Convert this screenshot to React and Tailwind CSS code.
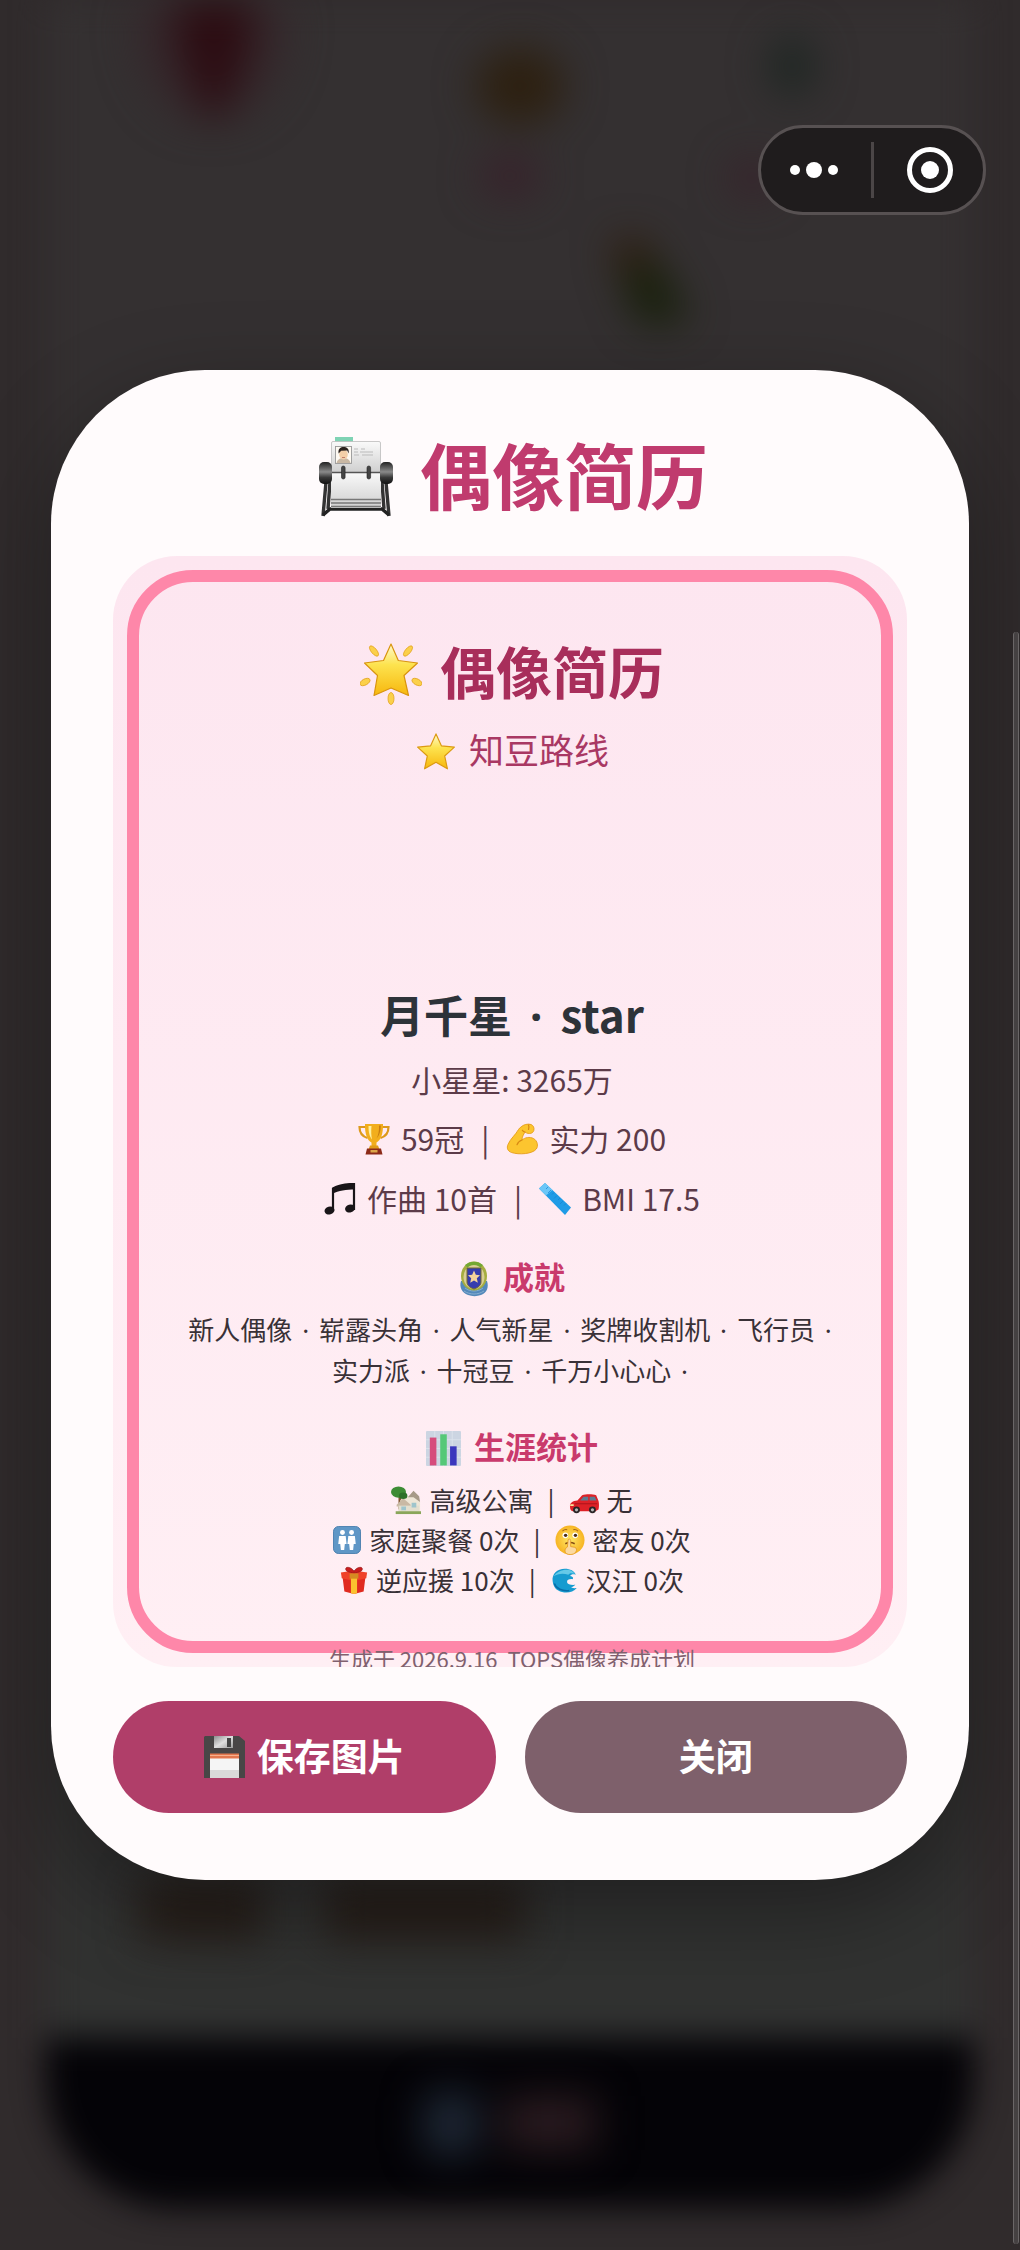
import React from "react";

function Icon({ className, children, viewBox = "0 0 32 32" }) {
  return (
    <svg className={className} viewBox={viewBox} aria-hidden="true" fill="none">
      {children}
    </svg>
  );
}

const STAR = "M16 2.2 20.1 11.3 30 12.3 22.6 19 24.7 28.8 16 23.8 7.3 28.8 9.4 19 2 12.3 11.9 11.3Z";

function Rolodex({ className }) {
  return (
    <Icon className={className} viewBox="0 0 76 82">
      <defs>
        <linearGradient id="knob" x1="0" y1="0" x2="0" y2="1">
          <stop offset="0" stopColor="#222" />
          <stop offset=".45" stopColor="#8a8a8a" />
          <stop offset=".7" stopColor="#3a3a3a" />
          <stop offset="1" stopColor="#111" />
        </linearGradient>
        <linearGradient id="sheet" x1="0" y1="0" x2="0" y2="1">
          <stop offset="0" stopColor="#fafafa" />
          <stop offset="1" stopColor="#cfcfcf" />
        </linearGradient>
      </defs>
      <rect x="17" y="1" width="18" height="8" fill="#7fd3b4" />
      <path d="M8 46 5 80M12 46 10 73M68 46l3 34M64 46l2 27" stroke="#333" strokeWidth="3.4" />
      <path d="M5 79 12 73H64L71 79" stroke="#222" strokeWidth="3.4" strokeLinejoin="round" />
      <rect x="13" y="36" width="50" height="36" fill="url(#sheet)" />
      <path d="M13 63.500h50M13 67h50M13 70.500h50" stroke="#777" strokeWidth="1.300" />
      <rect x="13.500" y="5.500" width="49" height="31" rx="1.500" fill="url(#sheet)" stroke="#bbb" strokeWidth=".8" />
      <rect x="17.500" y="10.500" width="16" height="17" fill="#fdf9f2" stroke="#999" strokeWidth=".9" />
      <path d="M18.500 27c1-4 4-5 7-5s6 1 7 5Z" fill="#c9b8a4" />
      <ellipse cx="25.500" cy="18.500" rx="4.300" ry="5" fill="#f3cfa8" />
      <path d="M20.600 17.500c-.8-5 2-6.500 5-6.500s6 1.500 5 6.500l-1.400-3-6 .3Z" fill="#2a211d" />
      <path d="M24 21.500h3" stroke="#b4695a" strokeWidth=".8" />
      <path d="M36 13h4m3 0h4M36 16h4m2 0h13M36 19h5m3 0h11" stroke="#b5b5b5" strokeWidth=".9" />
      <path d="M13 36.500h50" stroke="#555" strokeWidth="1.600" />
      <rect x="1" y="26" width="13" height="22" rx="5" fill="url(#knob)" />
      <rect x="62" y="26" width="13" height="22" rx="5" fill="url(#knob)" />
      <rect x="23.500" y="30" width="3.600" height="13" rx="1.800" fill="#444" stroke="#222" strokeWidth=".6" />
      <rect x="49" y="30" width="3.600" height="13" rx="1.800" fill="#444" stroke="#222" strokeWidth=".6" />
    </Icon>
  );
}

function StarFill({ id }) {
  return (
    <defs>
      <linearGradient id={id} x1="0" y1="0" x2="0" y2="1">
        <stop offset="0" stopColor="#fffbd0" />
        <stop offset=".4" stopColor="#fde34f" />
        <stop offset="1" stopColor="#f7b70d" />
      </linearGradient>
    </defs>
  );
}

function GlowingStar({ className }) {
  return (
    <Icon className={className} viewBox="0 0 62 62">
      <StarFill id="glow" />
      <path
        d="M31 1 38.300 17.500 57.500 20 44 32.500 48.500 52.500 31 45 14 52.500 17.500 32.500 4.500 20 23.500 17.500Z"
        fill="url(#glow)" stroke="#d9940f" strokeWidth="1.200" strokeLinejoin="round"
      />
      <g fill="#fbd04a" stroke="#e3a521" strokeWidth=".8">
        <ellipse cx="14" cy="8" rx="2.700" ry="6.300" transform="rotate(-40 14 8)" />
        <ellipse cx="48" cy="8" rx="2.700" ry="6.300" transform="rotate(40 48 8)" />
        <ellipse cx="5" cy="39" rx="3" ry="5.500" transform="rotate(62 5 39)" />
        <ellipse cx="57" cy="39" rx="3" ry="5.500" transform="rotate(-62 57 39)" />
        <ellipse cx="31" cy="55.500" rx="3" ry="6" />
      </g>
    </Icon>
  );
}

function Star({ className }) {
  return (
    <Icon className={className}>
      <StarFill id="plain" />
      <path d={STAR} fill="url(#plain)" stroke="#dc9a12" strokeWidth=".9" strokeLinejoin="round" />
    </Icon>
  );
}

function Trophy({ className }) {
  return (
    <Icon className={className}>
      <path d="M8 4H1.500c0 6 3 9.500 8 11M24 4h6.500c0 6-3 9.500-8 11" stroke="#dd9a1c" strokeWidth="2.200" />
      <path d="M7 1h18c.4 10-2.500 16.500-6.500 18.500v4h-5v-4C9.500 17.500 6.600 11 7 1Z" fill="#f2ae1c" />
      <path d="M10.500 3c0 7 1.200 10.500 3.500 13.500-.8-4-1-8.500-.5-13.500Z" fill="#fff0a0" />
      <path d="M21 2.500c.3 5-.7 10-2.500 13 3-3 4.300-8 4.300-13Z" fill="#c97d10" />
      <path d="M12 22.500h8l1.300 3.500H10.700Z" fill="#e09a18" />
      <path d="M9 25.500h14l1.500 6h-17Z" fill="#8c2a18" />
      <rect x="12.500" y="27" width="7" height="2.500" fill="#dba548" />
    </Icon>
  );
}

function Biceps({ className }) {
  return (
    <Icon className={className}>
      <path
        d="M15 4c2.500-2.500 7-3.500 10-2.500 2.500 1 3.500 3.500 2.800 6-.6 2-2.300 3-4.300 3-2 0-3.500-.6-4.500-1.500-1.500 2.500-3 5-3 8 3-2.500 7.500-3.500 11.500-1.500 4 2.200 5 7.500 2.800 10.500-3.800 5-17.300 6-24.800 3.500C1.500 28 .5 25 2 21.500 4.500 15.500 9.500 12 12.500 6.500c.7-1.200 1.500-1.800 2.500-2.500Z"
        fill="#fcc52f" stroke="#e59d1b" strokeWidth=".9"
      />
      <path d="M16 17c-2.500.8-4.200 2.400-5 4.700M19 9c-1.200-.3-2-.9-2.600-1.700M22.500 2c.6 1.500.6 3 0 4.500" stroke="#d98a14" strokeWidth="1.200" strokeLinecap="round" />
    </Icon>
  );
}

function Notes({ className }) {
  return (
    <Icon className={className}>
      <path d="M9 28V5.500C14 2.500 22 1 30 1v26" stroke="#191518" strokeWidth="2.200" />
      <path d="M8 5.500C14 2 22 .5 31 .5v6C22 6.500 15 7.500 8 11Z" fill="#191518" />
      <ellipse cx="5.500" cy="27.500" rx="5" ry="4" transform="rotate(-15 5.500 27.500)" fill="#191518" />
      <ellipse cx="26" cy="25.500" rx="5" ry="4" transform="rotate(-15 26 25.500)" fill="#191518" />
    </Icon>
  );
}

function Ruler({ className }) {
  return (
    <Icon className={className}>
      <path d="M6 0 32 24.500 26 32 0 5.500Z" fill="#1f9be6" />
      <path d="M6 0 13.500 7 7 12.500 0 5.500Z" fill="#6bc6f7" />
      <path d="m9 4-2 2m5 1-3 3m6-.5-2 2m5 1-3 3m6-.5-2 2m5 1-3 3m6-.5-2 2" stroke="#1583d0" strokeWidth=".7" />
    </Icon>
  );
}

function Badge({ className }) {
  return (
    <Icon className={className} viewBox="0 0 30 36">
      <path d="M2 20c-2 6 1 12 7 14 4 1.500 9 1.500 13 0 6-2 8-8 6-14Z" fill="#5489ba" />
      <path d="M6 27c5 4 13 4 18 0M5 30c6 4 14 4 20 0" stroke="#86aed0" strokeWidth="1" />
      <ellipse cx="15" cy="15" rx="13" ry="14.500" fill="#a5ad3f" />
      <path d="M6 4c5-4.500 13-4.500 18 0l-3 3c-3-2-9-2-12 0Z" fill="#74a832" />
      <ellipse cx="15" cy="16" rx="10.500" ry="12" fill="#d9ce94" />
      <path d="M8 7h14v14c0 4-4 6-7 7-3-1-7-3-7-7Z" fill="#363cae" stroke="#73682e" strokeWidth="1" />
      <path d="m15 9.500 1.800 4.200 4.200.5-3.200 3 1 4.500-3.800-2.300-3.800 2.300 1-4.500-3.200-3 4.200-.5Z" fill="#f4d29c" />
    </Icon>
  );
}

function BarChart({ className }) {
  return (
    <Icon className={className}>
      <rect width="32" height="32" rx="1" fill="#ccd5e2" />
      <path d="M0 8h32M0 16h32M0 24h32M8 0v32M16 0v32M24 0v32" stroke="#dbe2ec" strokeWidth=".8" />
      <rect x="3.500" y="6" width="6" height="25.500" fill="#d64c7c" />
      <rect x="13" y="3" width="6" height="28.500" fill="#55c878" />
      <rect x="22" y="14" width="6" height="17.500" fill="#3b37bd" />
    </Icon>
  );
}

function House({ className }) {
  return (
    <Icon className={className}>
      <path d="M8 10h3v16H8Z" fill="#80552f" />
      <path d="M10 16 24 9l7 9v11H8Z" fill="#eee6d6" />
      <path d="M18 13 24 6l6 6 1 6-7-5Z" fill="#a79a88" />
      <path d="M6 21 13 14l8 7v2H6Z" fill="#c9b9a4" />
      <path d="M8 22h22v6H8Z" fill="#e3dfcf" />
      <path d="M11 23h5v4h-5ZM22 19h5v5h-5Z" fill="#9fc5cc" />
      <path d="M5 28h27v3H5Z" fill="#8aa65a" />
      <ellipse cx="8" cy="7.500" rx="8" ry="6" fill="#3d8c35" />
      <ellipse cx="13" cy="11.500" rx="4.500" ry="3.500" fill="#2d7129" />
    </Icon>
  );
}

function Car({ className }) {
  return (
    <Icon className={className}>
      <path d="M1 22c0-3 3-5 8-5.500L14 11c4-1.500 11-1.500 15 0l2.500 6c.7 3 .6 6 0 9L28 28H4c-2-.5-3-2-3-6Z" fill="#dd2127" />
      <path d="M12 16.500 15.500 12.500h5v4ZM22 12.500h5.500l1.800 4H22Z" fill="#5d7c92" />
      <path d="M1.500 20.500h3.500v2H1.200Z" fill="#fbe49a" />
      <path d="M6 20h24" stroke="#a11218" strokeWidth=".9" />
      <circle cx="8" cy="26.500" r="3.700" fill="#2a2526" /><circle cx="8" cy="26.500" r="1.700" fill="#b9b9b9" />
      <circle cx="25" cy="26.500" r="3.700" fill="#2a2526" /><circle cx="25" cy="26.500" r="1.700" fill="#b9b9b9" />
    </Icon>
  );
}

function Restroom({ className }) {
  return (
    <Icon className={className}>
      <rect x=".5" y=".5" width="31" height="31" rx="6" fill="#5f97c6" stroke="#3f78a9" />
      <circle cx="10.800" cy="7.500" r="2.800" fill="#fff" /><circle cx="21.200" cy="7.500" r="2.800" fill="#fff" />
      <path d="M7 11.500h7.500l1 9h-2l-.7 7H9l-.7-7H6ZM17.500 11.500H25l1 9h-2.300l-.7 7h-3.800l-.7-7h-2Z" fill="#fff" />
    </Icon>
  );
}

function Shush({ className }) {
  return (
    <Icon className={className}>
      <defs>
        <radialGradient id="face"><stop offset="0" stopColor="#ffe867" /><stop offset="1" stopColor="#f7b423" /></radialGradient>
      </defs>
      <circle cx="16" cy="16" r="15.500" fill="url(#face)" />
      <circle cx="11" cy="11" r="3" fill="#fff" /><circle cx="21.500" cy="11" r="3" fill="#fff" />
      <circle cx="11.300" cy="11" r="1.800" fill="#4b2c14" /><circle cx="21.800" cy="11" r="1.800" fill="#4b2c14" />
      <path d="M8 6.500c1.500-1.500 3-2 5-1.500M19.500 5c2-.5 3.500 0 5 1.500" stroke="#a86616" strokeWidth="1.200" />
      <path d="M11 20c3-1.500 7-1.500 10 0" stroke="#854d14" strokeWidth="1.600" />
      <path d="M14 15.500c1.200-1 2.700-.5 2.700 1V23l4.500.8c2 .6 2.300 3 1 5-1.200 2-3.500 2.700-6 2.700-3 0-5-1-5.500-3.500-.3-2 .6-3.500 2.500-4.500Z" fill="#fbd9a0" stroke="#e69a20" strokeWidth=".9" />
    </Icon>
  );
}

function Gift({ className }) {
  return (
    <Icon className={className}>
      <path d="M3 13h26l-2 16-11 3-11-3Z" fill="#e02b20" />
      <path d="M1 7.500 16 5l15 2.500-1 6.500-14 3L2 14Z" fill="#ef4129" />
      <path d="M12.500 13.500h7V31l-3.500 1-3.500-1Z" fill="#fbc22f" />
      <path d="M16 8C11 7 6 6.500 6.500 3 7 .5 13 1 16 6c3-5 9-5.500 9.500-3C26 6.500 21 7 16 8Z" fill="#c91e1e" stroke="#8d1616" strokeWidth=".7" />
      <path d="M11 8.500h10v6H11Z" fill="#d58b22" />
    </Icon>
  );
}

function Wave({ className }) {
  return (
    <Icon className={className}>
      <path d="M3 17C2 9 8 3 17 3c6 0 11 2.500 12.500 7-3-1-5.500-.5-6.500 1.500 3 .3 4 2 3 3.500-4-.5-7 1-6.500 3.500C20 21 24 22 29 21.500c-2 2-3 2.500-5 3 3 1 4.500 1 6.500.7C26 31 16 32 9.500 28 5 25.500 3.500 21 3 17Z" fill="#169bd0" />
      <path d="M4 12C8 6 15 3.500 22 4.500c3 .6 5 2.500 6.500 4.500-4-1.500-7-.5-7.500 1C15 8 9 8.500 4 12Z" fill="#64c9e8" />
      <path d="M5 20c2 6 9 9 17 8" stroke="#086da8" strokeWidth="1.700" />
    </Icon>
  );
}

function Floppy({ className }) {
  return (
    <Icon className={className} viewBox="0 0 41 42">
      <defs><linearGradient id="metal" x1="0" y1="0" x2="1" y2="1"><stop stopColor="#8d8d8d" /><stop offset=".5" stopColor="#e0e0e0" /><stop offset="1" stopColor="#9b9b9b" /></linearGradient></defs>
      <path d="M1 0h34l6 5v37H0V1Z" fill="#484646" />
      <rect x="10" y="0" width="19" height="12" fill="url(#metal)" /><rect x="23" y="2" width="4" height="9" fill="#454545" />
      <rect x="6" y="18" width="29" height="24" fill="#f5f5f5" />
      <path d="M6 17.500h29v5H6Z" fill="#e2774e" /><path d="M6 19.500h29" stroke="#f7b08d" strokeWidth="1" />
      <path d="M6 34h29v8H6Z" fill="#dadada" />
    </Icon>
  );
}

function Line({ className, items }) {
  return (
    <p className={className}>
      {items.map((item, i) => (
        <React.Fragment key={item.text}>
          {i > 0 && <span className="px-[6px]">|</span>}
          <item.icon className={item.size} />
          <span>{item.text}</span>
        </React.Fragment>
      ))}
    </p>
  );
}

function Dot({ className = "mx-1" }) {
  return <span className={`font-['Noto_Sans',sans-serif] ${className}`}>·</span>;
}

function Achievements({ names }) {
  return (
    <span className="block whitespace-nowrap">
      {names.map((name) => (
        <React.Fragment key={name}>
          {name} <Dot />{" "}
        </React.Fragment>
      ))}
    </span>
  );
}

function Backdrop() {
  return (
    <div className="absolute inset-0 overflow-hidden bg-[#302b2c]" aria-hidden="true">
      <div className="absolute inset-0 flex flex-col px-[46px] blur-[16px]">
        <div className="flex-1 bg-[linear-gradient(180deg,#343031_0%,#343031_60%,#313231_100%)]" />
        <div className="h-[170px] rounded-b-[130px] bg-[#040307]" />
        <div className="h-[42px]" />
      </div>
      <svg className="absolute inset-0 h-full w-full blur-[20px]" viewBox="0 0 1020 2250" preserveAspectRatio="none">
        <ellipse cx="212" cy="30" rx="75" ry="90" fill="#35272b" />
        <path d="M170-60h90l-12 110-28 70h-12l-28-70Z" fill="#2c0c12" />
        <ellipse cx="520" cy="86" rx="44" ry="38" fill="#2d2010" />
        <ellipse cx="792" cy="66" rx="22" ry="30" fill="#1d2622" />
        <ellipse cx="510" cy="176" rx="30" ry="20" fill="#38202a" />
        <ellipse cx="752" cy="178" rx="22" ry="18" fill="#38202a" />
        <path d="M612 240 645 240 660 290 630 300Z" fill="#2f1a08" />
        <path d="M622 270 655 260 690 320 640 324Z" fill="#161f08" />
        <path d="M140 1880h125v60H140ZM325 1880h200v60H325Z" fill="#261e19" />
        <rect x="424" y="2092" width="54" height="64" rx="14" fill="#1f2937" />
        <rect x="502" y="2096" width="94" height="54" fill="#2a1b20" />
      </svg>
    </div>
  );
}

function Capsule() {
  return (
    <div className="absolute right-[34px] top-[125px] flex h-[90px] w-[228px] items-center rounded-full border-[3px] border-[#575152] bg-[#1f1c1d]">
      <button type="button" aria-label="更多" className="flex h-full flex-1 items-center justify-center gap-[6px] pr-1">
        <span className="size-[10px] rounded-full bg-white" />
        <span className="size-[16px] rounded-full bg-white" />
        <span className="size-[10px] rounded-full bg-white" />
      </button>
      <span className="h-14 w-[3px] bg-[#4b4647]" />
      <button type="button" aria-label="退出" className="flex h-full flex-1 items-center justify-center pl-1">
        <span className="flex size-[46px] items-center justify-center rounded-full border-[5px] border-white">
          <span className="size-[18px] rounded-full bg-white" />
        </span>
      </button>
    </div>
  );
}

const profile = [
  [
    { icon: Trophy, size: "size-8", text: "59冠" },
    { icon: Biceps, size: "size-8", text: "实力 200" },
  ],
  [
    { icon: Notes, size: "size-8", text: "作曲 10首" },
    { icon: Ruler, size: "size-8", text: "BMI 17.5" },
  ],
];

const career = [
  [
    { icon: House, size: "size-[30px]", text: "高级公寓" },
    { icon: Car, size: "size-[30px]", text: "无" },
  ],
  [
    { icon: Restroom, size: "size-7", text: "家庭聚餐 0次" },
    { icon: Shush, size: "size-[30px]", text: "密友 0次" },
  ],
  [
    { icon: Gift, size: "size-7", text: "逆应援 10次" },
    { icon: Wave, size: "size-7", text: "汉江 0次" },
  ],
];

function ResumeCard() {
  return (
    <article className="relative aspect-[5/7] overflow-hidden rounded-[64px] bg-linear-to-b from-[#fde6f0] to-[#ffeff4] pt-[82px] text-center">
      <div className="absolute inset-[14px] rounded-[66px] border-[12px] border-[#fe87a9]" />
      <div className="relative pl-1">
        <h2 className="flex h-[72px] items-center justify-center gap-[18px] text-[56px] font-bold text-[#a82e5b]">
          <GlowingStar className="size-[62px]" />
          <span className="pb-2">偶像简历</span>
        </h2>
        <p className="mt-[18px] flex h-[48px] items-center justify-center gap-3 text-[35px] text-[#a93863]">
          <Star className="size-[42px]" />
          <span className="pb-1">知豆路线</span>
        </p>
        <h3 className="mt-[206px] h-[64px] text-[44px] font-bold leading-[64px] text-[#2d3339]">
          月千星 <Dot className="mx-2" /> star
        </h3>
        <p className="mt-[3px] h-[60px] text-[30px] leading-[60px] text-[#5c3b49]">小星星: 3265万</p>
        {profile.map((items) => (
          <Line key={items[0].text} items={items} className="flex h-[60px] items-center justify-center gap-[11px] text-[30px] text-[#5c3b49]" />
        ))}
        <h4 className="mt-[26px] flex h-[48px] items-center justify-center gap-[14px] text-[31px] font-bold text-[#c93a6c]">
          <Badge className="h-9 w-[30px]" />
          <span className="pb-1">成就</span>
        </h4>
        <p className="mt-[6px] text-[26px] leading-[40px] text-[#393137]">
          <Achievements names={["新人偶像", "崭露头角", "人气新星", "奖牌收割机", "飞行员"]} />
          <Achievements names={["实力派", "十冠豆", "千万小心心"]} />
        </p>
        <h4 className="mt-[34px] flex h-[48px] items-center justify-center gap-[13px] text-[31px] font-bold text-[#c93a6c]">
          <BarChart className="size-[35px]" />
          <span className="pb-1">生涯统计</span>
        </h4>
        <div className="mt-[7px]">
          {career.map((items) => (
            <Line key={items[0].text} items={items} className="flex h-[40px] items-center justify-center gap-2 text-[26px] text-[#393137]" />
          ))}
        </div>
        <p className="mt-[40px] whitespace-pre text-[22px] leading-[36px] text-[#80606e]">生成于 2026.9.16  TOPS偶像养成计划</p>
      </div>
    </article>
  );
}

export default function App() {
  return (
    <main className="relative flex min-h-screen items-center bg-[#302b2c] px-[51px] font-['Noto_Sans_CJK_SC',sans-serif]">
      <Backdrop />
      <Capsule />
      <section
        role="dialog"
        aria-labelledby="resume-title"
        className="relative w-full rounded-[154px] bg-[#fffbfc] px-[62px] pb-[67px] pt-[62px] shadow-[0_30px_90px_rgba(0,0,0,0.35)]"
      >
        <h1 id="resume-title" className="flex h-[90px] items-center justify-center gap-[26px] pl-[6px] text-[72px] font-bold text-[#c03b6e]">
          <Rolodex className="h-[82px] w-[76px]" />
          <span className="pb-2">偶像简历</span>
        </h1>
        <div className="mt-[34px]">
          <ResumeCard />
        </div>
        <div className="mt-[34px] grid grid-cols-2 gap-[29px] text-[37px] font-bold text-white">
          <button type="button" className="flex h-[112px] items-center justify-center gap-3 rounded-full bg-[#b03e69]">
            <Floppy className="h-[42px] w-[41px]" />
            <span className="pb-1">保存图片</span>
          </button>
          <button type="button" className="h-[112px] rounded-full bg-[#7e606b] pb-1">关闭</button>
        </div>
      </section>
      <div className="absolute bottom-[6px] right-px top-[632px] w-[6px] rounded-full border-x border-[#6a6667] bg-[#454142]" aria-hidden="true" />
    </main>
  );
}
